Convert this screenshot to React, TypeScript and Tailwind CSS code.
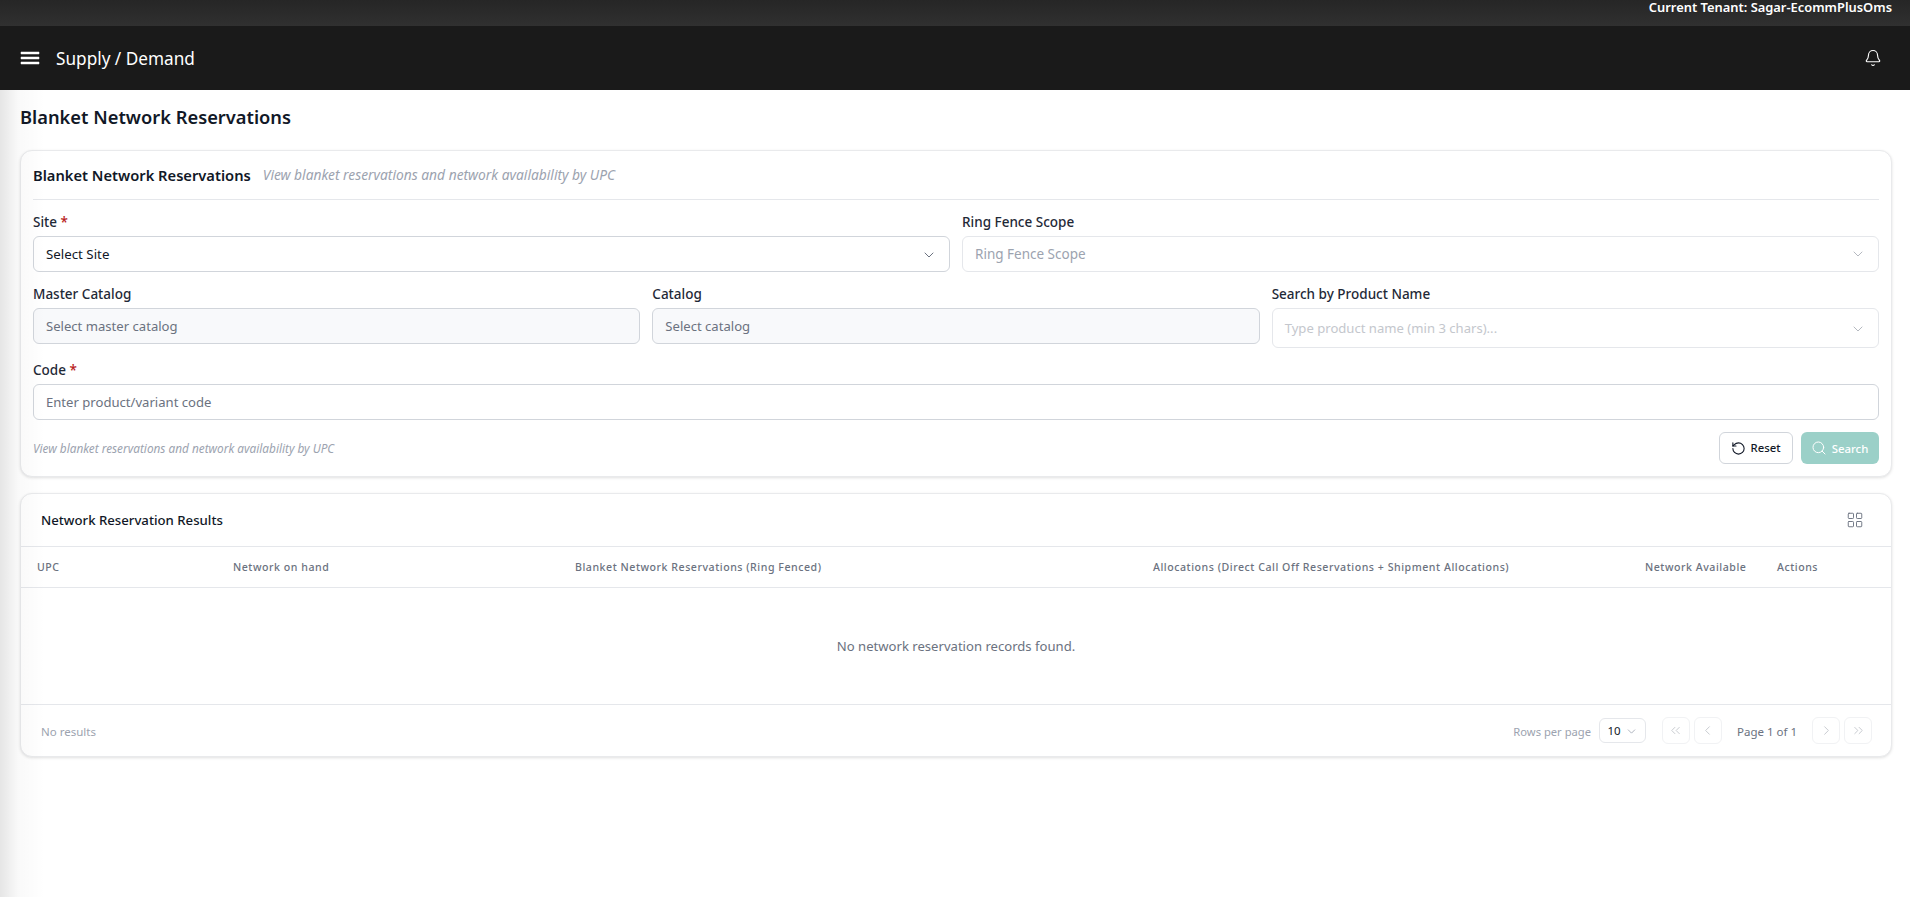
import { Bell, ChevronDown, ChevronLeft, ChevronRight, ChevronsLeft, ChevronsRight, LayoutGrid, RotateCcw, Search } from "lucide-react";

function Label({ children, req }: { children: React.ReactNode; req?: boolean }) {
  return (
    <div className="h-[18px] text-[13.5px] leading-[18px] font-medium text-[#1f2937]">
      {children}
      {req && <span className="text-[#b91c1c]"> *</span>}
    </div>
  );
}

function Field({ text, cls, textCls, chevCls }: { text: string; cls: string; textCls: string; chevCls?: string }) {
  return (
    <div className={`flex items-center justify-between rounded-md border pl-3 pr-[12px] ${cls}`}>
      <span className={textCls}>{text}</span>
      {chevCls && <ChevronDown size={16} strokeWidth={1.5} className={chevCls} />}
    </div>
  );
}

const cols = ["UPC", "Network on hand", "Blanket Network Reservations (Ring Fenced)", "Allocations (Direct Call Off Reservations + Shipment Allocations)", "Network Available", "Actions"];

function PageBtn({ children }: { children: React.ReactNode }) {
  return <div className="flex h-[27px] w-[28px] items-center justify-center rounded-md border border-[#f1f2f4] text-[#c4c7cd]">{children}</div>;
}

export default function App() {
  return (
    <div className="relative h-[897px] overflow-hidden bg-white font-['Noto_Sans','Open_Sans',sans-serif]">
      <div className="flex h-[26px] justify-end bg-gradient-to-b from-[#262626] to-[#303030] pr-[18px] text-[12.9px] leading-[14px] font-semibold text-white">
        Current Tenant: Sagar-EcommPlusOms
      </div>
      <header className="flex h-[64px] items-center justify-between bg-[#1a1a1a] pl-[18px] pr-[28px] text-white">
        <div className="flex items-center gap-[14px]">
          <svg width="24" height="24" viewBox="0 0 24 24" fill="currentColor" stroke="currentColor" strokeWidth="0.5"><path d="M3 18h18v-2H3v2zm0-5h18v-2H3v2zm0-7v2h18V6H3z" /></svg>
          <span className="pt-[1px] text-[17.2px] leading-6">Supply / Demand</span>
        </div>
        <Bell size={18} strokeWidth={1.5} />
      </header>
      <main className="pt-[14px] pr-[18px] pl-[20px]">
        <h1 className="h-[26px] text-[18.3px] leading-[26px] font-semibold text-[#111827]">Blanket Network Reservations</h1>
        <section className="mt-[20px] h-[327px] rounded-xl border border-[#e9eaec] bg-white px-3 shadow-[0_1px_3px_rgba(0,0,0,0.12)]">
          <div className="flex h-[49px] items-center gap-3 border-b border-[#e5e7eb]">
            <span className="text-[14.7px] font-semibold text-[#111827]">Blanket Network Reservations</span>
            <span className="text-[13.8px] text-[#9ca3af] italic">View blanket reservations and network availability by UPC</span>
          </div>
          <div className="mt-[13px] grid grid-cols-2 gap-3">
            <div>
              <Label req>Site</Label>
              <Field text="Select Site" cls="mt-[5px] h-[36px] border-[#d1d5db] pt-[1px] text-[13.3px]" textCls="text-[#111827]" chevCls="text-[#6b7280]" />
            </div>
            <div>
              <Label>Ring Fence Scope</Label>
              <Field text="Ring Fence Scope" cls="mt-[5px] h-[36px] border-[#e5e7eb] text-[13.5px]" textCls="text-[#9ca3af]" chevCls="text-[#b5b9c0]" />
            </div>
          </div>
          <div className="mt-[13px] grid grid-cols-3 gap-3">
            <div>
              <Label>Master Catalog</Label>
              <Field text="Select master catalog" cls="mt-[5px] h-[36px] border-[#d1d5db] bg-[#f8f9fb] pt-[2px] text-[13.1px]" textCls="text-[#6b7280]" />
            </div>
            <div>
              <Label>Catalog</Label>
              <Field text="Select catalog" cls="mt-[5px] h-[36px] border-[#d1d5db] bg-[#f8f9fb] pt-[2px] text-[13.1px]" textCls="text-[#6b7280]" />
            </div>
            <div>
              <Label>Search by Product Name</Label>
              <Field text="Type product name (min 3 chars)..." cls="mt-[5px] h-[40px] border-[#e5e7eb] pt-[1px] text-[13.1px]" textCls="text-[#c4c7cd]" chevCls="text-[#b5b9c0]" />
            </div>
          </div>
          <div className="mt-[13px]">
            <Label req>Code</Label>
            <Field text="Enter product/variant code" cls="mt-[5px] h-[36px] border-[#d1d5db] pt-[2px] text-[13.1px]" textCls="text-[#6b7280]" />
          </div>
          <div className="mt-[12px] flex items-center justify-between">
            <span className="pt-[1px] text-[11.8px] text-[#9ca3af] italic">View blanket reservations and network availability by UPC</span>
            <div className="flex gap-2">
              <div className="flex h-[32px] w-[74px] items-center justify-center gap-[5px] rounded-md border border-[#d1d5db] bg-white pr-[1px] text-[11.3px] font-medium text-[#111827]">
                <RotateCcw size={15} strokeWidth={1.75} /> <span className="pt-[1px]">Reset</span>
              </div>
              <div className="flex h-[32px] w-[78px] items-center justify-center gap-[5px] rounded-md bg-[#9bd0c8] pr-[1px] text-[11.4px] font-medium text-white">
                <Search size={16} strokeWidth={1.5} /> <span className="pt-[1px]">Search</span>
              </div>
            </div>
          </div>
        </section>
        <section className="mt-[16px] h-[264px] rounded-xl border border-[#e9eaec] bg-white shadow-[0_1px_3px_rgba(0,0,0,0.12)]">
          <div className="flex h-[53px] items-center justify-between border-b border-[#e5e7eb] pl-5 pr-[27px]">
            <span className="pt-[1px] text-[13.2px] font-medium text-[#111827]">Network Reservation Results</span>
            <LayoutGrid size={18} strokeWidth={1.25} className="text-[#6b7280]" />
          </div>
          <div className="grid h-[41px] grid-cols-[196px_342px_578px_492px_132px_1fr] items-center border-b border-[#e5e7eb]">
            {cols.map((c) => (
              <div key={c} className="pt-[1px] pl-4 text-[10.6px] font-medium tracking-[0.05em] whitespace-nowrap text-[#6b7280]">{c}</div>
            ))}
          </div>
          <div className="flex h-[117px] items-center justify-center border-b border-[#e5e7eb] pt-[1px] text-[13.1px] text-[#6b7280]">
            No network reservation records found.
          </div>
          <div className="flex h-[51px] items-center justify-between pl-5 pr-[19px] text-[11.5px]">
            <span className="pt-[3px] text-[#9ca3af]">No results</span>
            <div className="flex items-center">
              <span className="pt-[3px] text-[11.2px] text-[#9ca3af]">Rows per page</span>
              <div className="ml-2 flex h-[25px] w-[47px] items-center justify-center gap-1 rounded-md border border-[#e5e7eb] pt-[1px] text-[#111827]">
                10 <ChevronDown size={13} strokeWidth={1.5} className="text-[#9ca3af]" />
              </div>
              <div className="ml-4 flex gap-1">
                <PageBtn><ChevronsLeft size={15} strokeWidth={1.5} /></PageBtn>
                <PageBtn><ChevronLeft size={15} strokeWidth={1.5} /></PageBtn>
              </div>
              <span className="mx-[15px] pt-[3px] text-[#6b7280]">Page 1 of 1</span>
              <div className="flex gap-1">
                <PageBtn><ChevronRight size={15} strokeWidth={1.5} /></PageBtn>
                <PageBtn><ChevronsRight size={15} strokeWidth={1.5} /></PageBtn>
              </div>
            </div>
          </div>
        </section>
      </main>
      <div className="pointer-events-none absolute top-[90px] bottom-0 left-0 w-[45px] bg-gradient-to-r from-[#0000001a] via-[#00000006] via-40% to-transparent" />
    </div>
  );
}
